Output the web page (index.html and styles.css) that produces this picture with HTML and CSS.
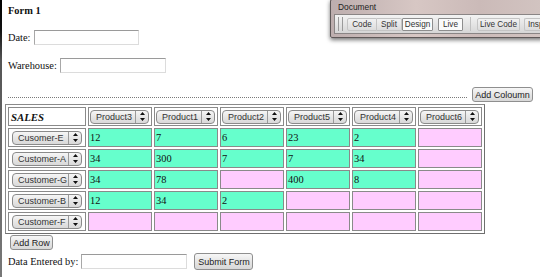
FILE: index.html
```html
<!DOCTYPE html>
<html>
<head>
<meta charset="utf-8">
<link rel="stylesheet" href="styles.css">
</head>
<body>
<div class="page">
  <div class="edge"></div>
  <div class="main">
    <div class="title">Form 1</div>
    <div class="field f-date"><span>Date:</span><span class="input w105"></span></div>
    <div class="field f-wh"><span>Warehouse:</span><span class="input w106"></span></div>
    <div class="toolrow">
      <div class="dots"></div>
      <span class="btn btn-col">Add Coloumn</span>
    </div>
    <table class="sales">
      <tr>
        <td class="corner">SALES</td>
        <td><span class="sel sel-p"><span class="sel-t">Product3</span><span class="sel-a"><svg width="5" height="9" viewBox="0 0 5 9"><path d="M2.5 0 L5 3 L0 3 Z M0 6 L5 6 L2.5 9 Z" fill="#111"/></svg></span></span></td>
        <td><span class="sel sel-p"><span class="sel-t">Product1</span><span class="sel-a"><svg width="5" height="9" viewBox="0 0 5 9"><path d="M2.5 0 L5 3 L0 3 Z M0 6 L5 6 L2.5 9 Z" fill="#111"/></svg></span></span></td>
        <td><span class="sel sel-p"><span class="sel-t">Product2</span><span class="sel-a"><svg width="5" height="9" viewBox="0 0 5 9"><path d="M2.5 0 L5 3 L0 3 Z M0 6 L5 6 L2.5 9 Z" fill="#111"/></svg></span></span></td>
        <td><span class="sel sel-p"><span class="sel-t">Product5</span><span class="sel-a"><svg width="5" height="9" viewBox="0 0 5 9"><path d="M2.5 0 L5 3 L0 3 Z M0 6 L5 6 L2.5 9 Z" fill="#111"/></svg></span></span></td>
        <td><span class="sel sel-p"><span class="sel-t">Product4</span><span class="sel-a"><svg width="5" height="9" viewBox="0 0 5 9"><path d="M2.5 0 L5 3 L0 3 Z M0 6 L5 6 L2.5 9 Z" fill="#111"/></svg></span></span></td>
        <td><span class="sel sel-p"><span class="sel-t">Product6</span><span class="sel-a"><svg width="5" height="9" viewBox="0 0 5 9"><path d="M2.5 0 L5 3 L0 3 Z M0 6 L5 6 L2.5 9 Z" fill="#111"/></svg></span></span></td>
      </tr>
      <tr>
        <td class="rowh"><span class="sel sel-c"><span class="sel-t">Cusomer-E</span><span class="sel-a"><svg width="5" height="9" viewBox="0 0 5 9"><path d="M2.5 0 L5 3 L0 3 Z M0 6 L5 6 L2.5 9 Z" fill="#111"/></svg></span></span></td>
        <td class="g">12</td><td class="g">7</td><td class="g">6</td><td class="g">23</td><td class="g">2</td><td class="p"></td>
      </tr>
      <tr>
        <td class="rowh"><span class="sel sel-c"><span class="sel-t">Customer-A</span><span class="sel-a"><svg width="5" height="9" viewBox="0 0 5 9"><path d="M2.5 0 L5 3 L0 3 Z M0 6 L5 6 L2.5 9 Z" fill="#111"/></svg></span></span></td>
        <td class="g">34</td><td class="g">300</td><td class="g">7</td><td class="g">7</td><td class="g">34</td><td class="p"></td>
      </tr>
      <tr>
        <td class="rowh"><span class="sel sel-c"><span class="sel-t">Customer-G</span><span class="sel-a"><svg width="5" height="9" viewBox="0 0 5 9"><path d="M2.5 0 L5 3 L0 3 Z M0 6 L5 6 L2.5 9 Z" fill="#111"/></svg></span></span></td>
        <td class="g">34</td><td class="g">78</td><td class="p"></td><td class="g">400</td><td class="g">8</td><td class="p"></td>
      </tr>
      <tr>
        <td class="rowh"><span class="sel sel-c"><span class="sel-t">Customer-B</span><span class="sel-a"><svg width="5" height="9" viewBox="0 0 5 9"><path d="M2.5 0 L5 3 L0 3 Z M0 6 L5 6 L2.5 9 Z" fill="#111"/></svg></span></span></td>
        <td class="g">12</td><td class="g">34</td><td class="g">2</td><td class="p"></td><td class="p"></td><td class="p"></td>
      </tr>
      <tr>
        <td class="rowh"><span class="sel sel-c"><span class="sel-t">Customer-F</span><span class="sel-a"><svg width="5" height="9" viewBox="0 0 5 9"><path d="M2.5 0 L5 3 L0 3 Z M0 6 L5 6 L2.5 9 Z" fill="#111"/></svg></span></span></td>
        <td class="p"></td><td class="p"></td><td class="p"></td><td class="p"></td><td class="p"></td><td class="p"></td>
      </tr>
    </table>
    <div class="addrow"><span class="btn btn-row">Add Row</span></div>
    <div class="field f-data"><span>Data Entered by:</span><span class="input w106s"></span><span class="btn btn-sub">Submit Form</span></div>
  </div>
</div>

<div class="docpanel">
  <div class="doc-title">Document</div>
  <div class="doc-bar">
    <span class="grip"></span>
    <span class="dbtn grp first b-code">Code</span><span class="dbtn grp b-split">Split</span>
    <span class="dbtn on">Design</span>
    <span class="dbtn on live">Live</span>
    <span class="sep"></span>
    <span class="dbtn grp first lc">Live Code</span>
    <span class="dbtn grp first insp">Insp</span>
  </div>
</div>
</body>
</html>
```

FILE: styles.css
```css
html, body {
  margin: 0;
  padding: 0;
  background: #fff;
  overflow: hidden;
}
body {
  width: 540px;
  height: 277px;
  position: relative;
  font-family: "Liberation Serif", "Times New Roman", serif;
  font-size: 10.4px;
  color: #111;
}
.page {
  display: flex;
  height: 277px;
}
.edge {
  width: 2px;
  flex: none;
  background: linear-gradient(to bottom, #000 0, #111 30px, #555 60px, #6a6a6a 160px, #777 277px);
}
.main {
  flex: 1;
  display: flex;
  flex-direction: column;
  align-items: flex-start;
}
.title {
  font-weight: bold;
  line-height: 12px;
  margin: 5px 0 0 6px;
}
.field {
  display: flex;
  align-items: center;
  height: 17px;
  margin-left: 6px;
  white-space: pre;
}
.field > span:first-child {
  margin-right: 3px;
}
.f-date { margin-top: 12px; }
.f-wh { margin-top: 11px; }
.f-data { margin-top: 3px; }
.input {
  display: inline-block;
  box-sizing: border-box;
  height: 15px;
  background: #fff;
  border: 1px solid #dcdcdc;
  border-top-color: #9a9a9a;
  border-left-color: #a8a8a8;
}
.w105 { width: 105px; }
.w106 { width: 106px; }
.w106s { width: 106px; height: 15px; margin-right: 7px; }
.toolrow {
  display: flex;
  align-items: flex-end;
  align-self: stretch;
  height: 16px;
  margin-top: 13px;
  padding: 0 7px 0 6px;
}
.dots {
  flex: 1;
  height: 0;
  border-bottom: 1px dotted #7a7a7a;
  margin: 0 5px 5px 0;
}
.btn {
  display: inline-flex;
  align-items: center;
  justify-content: center;
  box-sizing: border-box;
  font-family: "Liberation Sans", Arial, sans-serif;
  font-size: 9px;
  color: #222;
  border: 1px solid #8f8f8f;
  border-radius: 3px;
  background: linear-gradient(to bottom, #f7f7f7, #e4e4e4 55%, #d8d8d8);
}
.btn-col { width: 61px; height: 15px; margin-bottom: 1px; }
.btn-row { width: 43px; height: 15px; }
.btn-sub { width: 59px; height: 17px; }
.addrow {
  margin: 1px 0 0 8px;
  display: flex;
}
table.sales {
  margin: 1px 0 0 3px;
  border-collapse: separate;
  border-spacing: 2px;
  border: 1px solid #8a8a8a;
  border-right-color: #6f6f6f;
  border-bottom-color: #6f6f6f;
  table-layout: fixed;
  width: 480px;
}
.sales td {
  box-sizing: border-box;
  width: 64px;
  height: 19px;
  padding: 0 1px;
  border: 1px solid #8a8a8a;
  vertical-align: middle;
  line-height: 12px;
  overflow: hidden;
}
.sales td.corner, .sales td.rowh {
  width: 78px;
}
.corner {
  font-weight: bold;
  font-style: italic;
  font-size: 10.8px;
  padding-left: 2px !important;
}
.sales td.rowh { padding-left: 3px; }
.g { background: #66ffcc; }
.p { background: #ffccff; }
.sel {
  display: inline-flex;
  align-items: stretch;
  box-sizing: border-box;
  height: 14px;
  vertical-align: middle;
  border: 1px solid #8a8a8a;
  border-radius: 4px;
  background: linear-gradient(to bottom, #f6f6f6, #e6e6e6 50%, #d9d9d9);
  font-family: "Liberation Sans", Arial, sans-serif;
  font-size: 9px;
  color: #333;
}
.sel-p { width: 59px; }
.sel-c { width: 70px; }
.sel-t {
  flex: 1;
  display: flex;
  align-items: center;
  padding-left: 5px;
  line-height: 12px;
  white-space: nowrap;
}
.sel-a {
  width: 12px;
  display: flex;
  align-items: center;
  justify-content: center;
  border-left: 1px solid #9a9a9a;
}

/* Floating document window */
.docpanel {
  position: absolute;
  top: -1px;
  left: 330px;
  width: 214px;
  height: 39px;
  box-sizing: border-box;
  border: 1px solid #5e5858;
  border-radius: 2px;
  background: linear-gradient(to right, #bdaeae, #d7c7c4 40%, #cbbab8 70%, #d2c4c1);
  box-shadow: 0 2px 4px rgba(0,0,0,0.55);
  font-family: "Liberation Sans", Arial, sans-serif;
  color: #222;
  overflow: hidden;
}
.doc-title {
  font-size: 8.4px;
  line-height: 13px;
  height: 13px;
  padding-left: 7px;
  padding-top: 1px;
}
.doc-bar {
  display: flex;
  align-items: center;
  height: 20px;
  margin-left: 3px;
  box-sizing: border-box;
  border: 1px solid #8a8585;
  background: linear-gradient(to bottom, #f3f3f3, #e2e2e2 60%, #d6d6d6);
  white-space: nowrap;
  padding-left: 3px;
}
.grip {
  width: 3px;
  height: 14px;
  border-left: 1px solid #9a9a9a;
  border-right: 1px solid #9a9a9a;
  margin-right: 4px;
  flex: none;
}
.dbtn {
  display: inline-flex;
  align-items: center;
  justify-content: center;
  box-sizing: border-box;
  height: 13px;
  font-size: 8.2px;
  color: #333;
  flex: none;
}
.grp {
  background: linear-gradient(to bottom, #f1f1f1, #dcdcdc);
  border: 1px solid #c4c4c4;
  border-left: none;
}
.grp.first { border-left: 1px solid #c4c4c4; border-radius: 2px 0 0 2px; }
.b-code { width: 30px; }
.b-split { width: 25px; border-radius: 0 2px 2px 0; }
.on {
  background: #fafafa;
  border: 1px solid #8d8d8d;
  border-radius: 1px;
  width: 31px;
}
.live { width: 25px; margin-left: 5px; }
.sep {
  width: 0;
  height: 14px;
  border-left: 1px solid #c0c0c0;
  margin: 0 6px 0 7px;
  flex: none;
}
.lc { width: 43px; border-radius: 2px; border-right: 1px solid #c4c4c4; margin-right: 4px; }
.insp { width: 30px; justify-content: flex-start; padding-left: 3px; border-right: none; }
```
